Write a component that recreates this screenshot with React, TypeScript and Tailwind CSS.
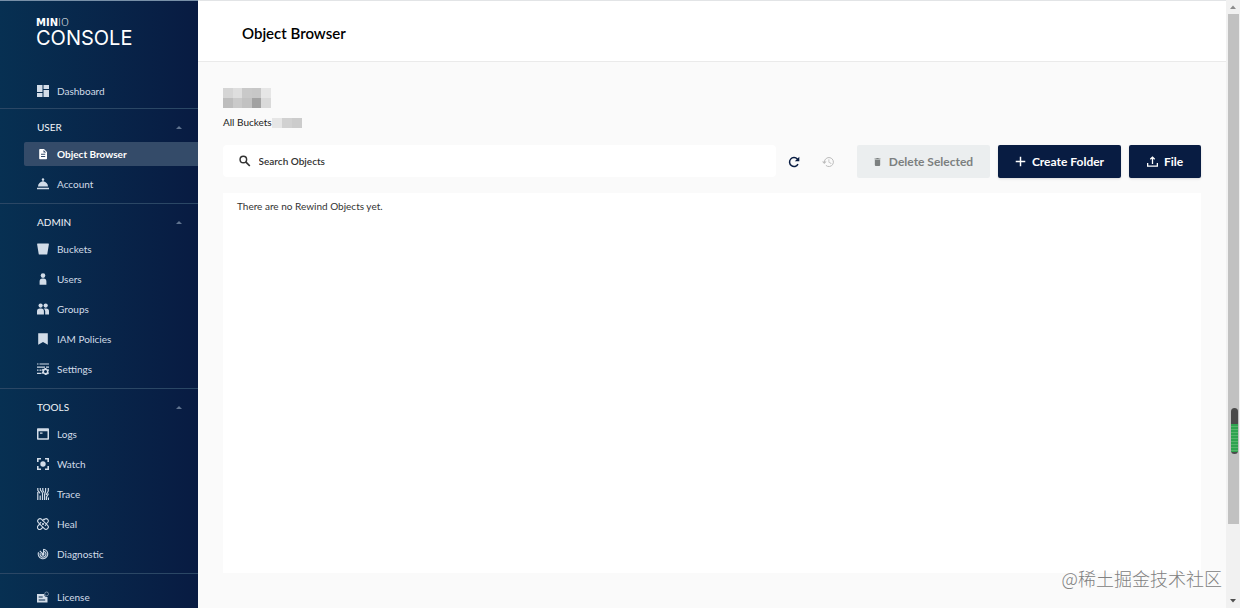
import React from 'react';

interface IconProps {
  className?: string;
}

type IconType = React.FC<IconProps>;

interface NavEntry {
  label: string;
  icon: IconType;
  active?: boolean;
}

interface NavGroup {
  title: string;
  items: NavEntry[];
}

const makeIcon = (content: React.ReactNode, viewBox = '0 0 12 12'): IconType => {
  const Icon: IconType = ({ className = 'size-3' }) => (
    <svg className={className} viewBox={viewBox} fill="currentColor" aria-hidden="true">
      {content}
    </svg>
  );
  return Icon;
};

const DashboardIcon = makeIcon(<path d="M0 0h5.5v7H0zM6.5 0H12v4H6.5zM0 8h5.5v4H0zM6.5 5H12v7H6.5z" />);

const DocumentIcon = makeIcon(
  <path fillRule="evenodd" d="M3 1h4l3 3v6.500a.8.8 0 0 1-.8.8H3a.8.8 0 0 1-.8-.8V1.800A.8.8 0 0 1 3 1zm3.500.9v2.600h2.600zM4 5.800v.9h4.200v-.9zM4 8v.9h4.200V8z" />
);

const AccountIcon = makeIcon(
  <>
    <circle cx="6" cy="1.400" r="1.200" />
    <path d="M5.500 2h1v1.500h-1zM1 8.600a5 5 0 0 1 10 0zM0 9.700h12v1.500H0z" />
  </>
);

const BucketIcon = makeIcon(<path d="M.7.500h10.600a.6.6 0 0 1 .6.700L10.300 11a.7.7 0 0 1-.7.600H2.400a.7.7 0 0 1-.7-.6L.1 1.200A.6.6 0 0 1 .7.500z" />);

const UserIcon = makeIcon(
  <>
    <circle cx="6" cy="2.600" r="2.300" />
    <path d="M2.600 11.800V8.500A2.900 2.900 0 0 1 5.500 5.600h1a2.900 2.900 0 0 1 2.900 2.900v3.300z" />
  </>
);

const GroupIcon = makeIcon(
  <>
    <circle cx="3.600" cy="2.600" r="2.100" />
    <circle cx="8.700" cy="2.600" r="2.100" />
    <path d="M0 11.500V8.300a2.800 2.800 0 0 1 2.800-2.800h1.300a2.800 2.800 0 0 1 2.800 2.800v3.200zM6.700 5.600h2.500A2.800 2.800 0 0 1 12 8.400v3.100H8.200V8.300a3.700 3.700 0 0 0-1.500-2.700z" />
  </>
);

const PolicyIcon = makeIcon(<path d="M1.200.3h9.600v11.400L6 8.900l-4.800 2.800z" />);

const SettingsIcon = makeIcon(
  <>
    <path d="M0 .4h1.500v1.200H0zM2.500.4H12v1.200H2.500zM0 3.500h8v1.200H0zM9 3.500h3v1.200H9zM0 6.600h1.500v1.200H0zM2.500 6.600h2v1.200h-2zM0 9.800h4.500V11H0z" />
    <path
      fillRule="evenodd"
      d="M7.700 4.900h1.700l.3 1 .8.400 1-.3.500 1.500-.6.700v1l.6.800-.7 1.300-1-.1-.7.500-.3.300H7.800l-.4-.9-.8-.4-1 .200-.8-1.400.6-.8v-.9l-.6-.7.800-1.400 1 .200.700-.4zm.8 2.200a1.500 1.500 0 1 0 0 3 1.500 1.500 0 0 0 0-3z"
    />
  </>
);

const LogsIcon = makeIcon(
  <path fillRule="evenodd" d="M.8.300h10.400a.8.8 0 0 1 .8.800v9.800a.8.800 0 0 1-.8.800H.8a.8.800 0 0 1-.8-.8V1.100A.8.800 0 0 1 .8.300zM1.500 3.300v6.900h9V3.300zM3 4.500h2.500v1.200H3z" />
);

const WatchIcon = makeIcon(
  <>
    <path d="M0 0h4v1.600H1.600V4H0zM8 0h4v4h-1.600V1.600H8zM0 8h1.600v2.400H4V12H0zM10.400 8H12v4H8v-1.600h2.400z" />
    <circle cx="6" cy="6" r="2.700" />
  </>
);

const TraceIcon = makeIcon(
  <g fill="none" stroke="currentColor" strokeWidth="1.200">
    <path d="M.8 0v2c0 1.500 2 1.500 2 3.500M.8 4v8M3.300 0v1.500c0 1.500 2.200 2 2.200 4V12M3.200 7.500V12M5.800 0v2c0 1 .9 1.500.9 2.500M8.600 0v2.500c0 2-1 2.500-1 4.500v5M11.300 0v2.500c0 2-2 2.500-2 4.500M11.300 5.500c0 2-1.800 2-1.800 4V12M11.500 9.500V12" />
  </g>
);

const HealIcon = makeIcon(
  <g fill="none" stroke="currentColor" strokeWidth="1.100">
    <rect x="-0.500" y="3.700" width="13" height="4.600" rx="2.300" transform="rotate(45 6 6)" />
    <path d="M4.200 4.200 2.800 5.500M7.900 7.900l1.300-1.400M6.900 2 8 1a2.200 2.200 0 0 1 3 3L9.200 6M2.800 6 1 7.900a2.200 2.200 0 0 0 3.100 3.100L6 9.200M5.200 2.800 7.300.900" />
    <circle cx="6" cy="6" r=".5" fill="currentColor" />
  </g>
);

const DiagnosticIcon = makeIcon(
  <g fill="none" stroke="currentColor" strokeWidth="1.100">
    <path d="M6.600 1.200a4.800 4.800 0 1 1-5.100 3M6.500 3.200a3 3 0 1 1-3.200 1.700M6 6 2.800 2.800M6.600 1v5" />
    <circle cx="6" cy="6.200" r="1" fill="currentColor" />
  </g>
);

const LicenseIcon = makeIcon(
  <>
    <path fillRule="evenodd" d="M0 3h7.200A3 3 0 0 0 10.500 6v5.500H0zm1.700 2.600v1h4v-1zm0 2.900v1h6.500v-1z" />
    <circle cx="9.600" cy="2.900" r="1.900" fill="none" stroke="currentColor" strokeWidth=".8" opacity=".6" />
  </>
);

const SearchIcon = makeIcon(
  <g fill="none" stroke="currentColor" strokeWidth="1.500">
    <circle cx="4.500" cy="4.500" r="3.400" />
    <path d="m7 7 4.200 4.200" strokeWidth="1.800" />
  </g>
);

const RefreshIcon = makeIcon(
  <>
    <path d="M10 8.200A4.500 4.500 0 1 1 9.300 2.900L10 3.600" fill="none" stroke="currentColor" strokeWidth="1.500" />
    <path d="M11.300.800v4.500H6.800z" />
  </>
);

const HistoryIcon = makeIcon(
  <>
    <path d="M2.400 6a4.500 4.500 0 1 1 1.500 3.400" fill="none" stroke="currentColor" strokeWidth="1" />
    <path d="M0 5.600h4.600L2.300 8zM6.500 3.200h.8v2.700l2.200 1.300-.4.700-2.600-1.600z" />
  </>
);

const TrashIcon = makeIcon(<path d="M1 2.800h8V10.500A1.500 1.500 0 0 1 7.500 12h-5A1.500 1.500 0 0 1 1 10.500zM.5.800H3L3.700 0h2.600L7 .800h2.500V2h-9z" />, '0 0 10 12');

const PlusIcon = makeIcon(<path d="M5.200.800h1.600v4.400h4.400v1.600H6.800v4.400H5.200V6.800H.8V5.200h4.400z" />);

const UploadIcon = makeIcon(
  <path d="M.7 7.500v3.600h10.600V7.500M6 8.800V2M3.600 3.600 6 1.300l2.400 2.300" fill="none" stroke="currentColor" strokeWidth="1.400" />
);

const groups: NavGroup[] = [
  {
    title: 'USER',
    items: [
      { label: 'Object Browser', icon: DocumentIcon, active: true },
      { label: 'Account', icon: AccountIcon },
    ],
  },
  {
    title: 'ADMIN',
    items: [
      { label: 'Buckets', icon: BucketIcon },
      { label: 'Users', icon: UserIcon },
      { label: 'Groups', icon: GroupIcon },
      { label: 'IAM Policies', icon: PolicyIcon },
      { label: 'Settings', icon: SettingsIcon },
    ],
  },
  {
    title: 'TOOLS',
    items: [
      { label: 'Logs', icon: LogsIcon },
      { label: 'Watch', icon: WatchIcon },
      { label: 'Trace', icon: TraceIcon },
      { label: 'Heal', icon: HealIcon },
      { label: 'Diagnostic', icon: DiagnosticIcon },
    ],
  },
];

const NavLink: React.FC<NavEntry> = ({ label, icon: Icon, active }) => (
  <li className="flex h-[30px] items-center pl-6">
    <a
      href="#"
      aria-current={active ? 'page' : undefined}
      className={`flex h-6 flex-1 items-center gap-2 rounded-l-xs pl-[13px] ${
        active ? 'bg-[#344b69] font-bold text-white' : 'text-[#d2dce8]'
      }`}
    >
      <Icon />
      {label}
    </a>
  </li>
);

const Sidebar: React.FC = () => (
  <nav className="flex w-[198px] shrink-0 flex-col overflow-hidden border-t border-[#7890a8] bg-linear-to-r from-[#073052] to-[#081b42] text-[10px]">
    <div className="flex h-[75px] shrink-0 flex-col pt-[18px] pl-9 text-white">
      <span className="font-['DejaVu_Sans'] text-[10px] leading-2">
        <b>MIN</b>
        <span className="font-light">IO</span>
      </span>
      <span className="font-['Inter'] text-[20px] leading-[22px] font-normal">CONSOLE</span>
    </div>
    <ul className="shrink-0 pb-0.5">
      <NavLink label="Dashboard" icon={DashboardIcon} />
    </ul>
    {groups.map((group) => (
      <section key={group.title} className="shrink-0 border-t border-[#2b4765] pt-1.5 pb-1">
        <button type="button" className="flex h-6 w-full items-center justify-between pr-4 pl-[37px] text-[#f0f4f8]">
          {group.title}
          <svg className="h-[3px] w-1.5 text-[#60748f]" viewBox="0 0 6 3" fill="currentColor" aria-hidden="true">
            <path d="M0 3 3 0l3 3z" />
          </svg>
        </button>
        <ul>
          {group.items.map((item) => (
            <NavLink key={item.label} {...item} />
          ))}
        </ul>
      </section>
    ))}
    <ul className="shrink-0 border-t border-[#2b4765] pt-2">
      <NavLink label="License" icon={LicenseIcon} />
    </ul>
  </nav>
);

// Redacted bucket name, one grey per mosaic cell
const mosaic = ['#d5d5d5', '#dedede', '#c9c9c9', '#c7c7c7', '#e6e6e6', '#bdbdbd', '#cacaca', '#c2c2c2', '#a2a2a2', '#dadada'];
const crumbMosaic = ['#e6e6e6', '#d1d1d1', '#cccccc'];

const Toolbar: React.FC = () => (
  <div className="flex items-start">
    <label className="flex h-8 flex-1 items-center gap-2 rounded-sm bg-white pl-4 text-[#333]">
      <SearchIcon />
      <input
        type="text"
        aria-label="Search Objects"
        placeholder="Search Objects"
        className="w-full bg-transparent text-[10px] font-semibold outline-none placeholder:text-[#333] placeholder:opacity-100"
      />
    </label>
    <div className="flex h-[33px] items-center gap-[22px] px-3 text-[#081c42]">
      <button type="button" aria-label="Refresh">
        <RefreshIcon />
      </button>
      <button type="button" aria-label="Rewind" disabled className="mr-[11px] text-[#bcbcbc]">
        <HistoryIcon />
      </button>
    </div>
    <div className="flex gap-2 text-[12px] font-bold">
      <button type="button" disabled className="flex h-[33px] w-[133px] items-center justify-center gap-2 rounded-xs bg-[#ebeeef] text-[#7c8080]">
        <TrashIcon className="h-2 w-[7px]" />
        Delete Selected
      </button>
      <button type="button" className="flex h-[33px] w-[123px] items-center justify-center gap-1.5 rounded-xs bg-[#081c42] text-white shadow-sm">
        <PlusIcon className="size-[11px]" />
        Create Folder
      </button>
      <button type="button" className="flex h-[33px] w-[72px] items-center justify-center gap-1.5 rounded-xs bg-[#081c42] text-white shadow-sm">
        <UploadIcon className="size-[11px]" />
        File
      </button>
    </div>
  </div>
);

const Scrollbar: React.FC = () => (
  <div className="relative flex w-3.5 shrink-0 flex-col items-center bg-[#f1f1f1]" aria-hidden="true">
    <svg className="h-3.5 w-2 text-[#8c8c8c]" viewBox="0 0 8 14" fill="currentColor">
      <path d="m1 9 3-3.500L7 9z" />
    </svg>
    <div className="w-[11px] flex-1 bg-[#c1c1c1]" />
    <div className="flex h-[84px] items-end">
      <svg className="h-3.5 w-2 text-[#505050]" viewBox="0 0 8 14" fill="currentColor">
        <path d="m1 5 3 3.500L7 5z" />
      </svg>
    </div>
    <div className="absolute top-[408px] right-0.5 flex h-[46px] w-[7px] flex-col overflow-hidden rounded-full bg-[#4a4a4a]">
      <div className="mt-4 mb-0.5 flex-1 bg-[repeating-linear-gradient(#2fa34f_0_2px,#55b56a_2px_3px)]" />
    </div>
  </div>
);

export default function App() {
  return (
    <div className="relative flex h-screen overflow-hidden bg-[#fafafa] font-['Lato',sans-serif]">
      <Sidebar />
      <main className="flex min-w-0 flex-1 flex-col border-t border-[#e2e4e6]">
        <header className="flex h-[61px] shrink-0 items-center border-b border-[#eaeaea] bg-white pt-1 pl-11">
          <h1 className="text-[15px] font-semibold text-black">Object Browser</h1>
        </header>
        <div className="flex flex-1 flex-col pt-[26px] pr-[25px] pb-[35px] pl-[25px]">
          <div className="grid w-12 grid-cols-5">
            {mosaic.map((color, i) => (
              <span key={i} className="h-2.5" style={{ backgroundColor: color }} />
            ))}
          </div>
          <div className="mt-1.5 mb-3.5 flex h-[17px] items-center text-[10px] text-[#222]">
            <a href="#">All Buckets</a>
            <span className="flex">
              {crumbMosaic.map((color) => (
                <span key={color} className="h-2.5 w-2.5" style={{ backgroundColor: color }} />
              ))}
            </span>
          </div>
          <Toolbar />
          <section className="mt-[15px] flex-1 bg-white px-3.5 pt-[5px] text-[10px] leading-4 text-[#333]">
            There are no Rewind Objects yet.
          </section>
        </div>
      </main>
      <Scrollbar />
      <p className="absolute right-[18px] bottom-[18px] font-['Noto_Sans_CJK_SC',sans-serif] text-[18px] leading-6 font-light text-[#808080]">
        @稀土掘金技术社区
      </p>
    </div>
  );
}
